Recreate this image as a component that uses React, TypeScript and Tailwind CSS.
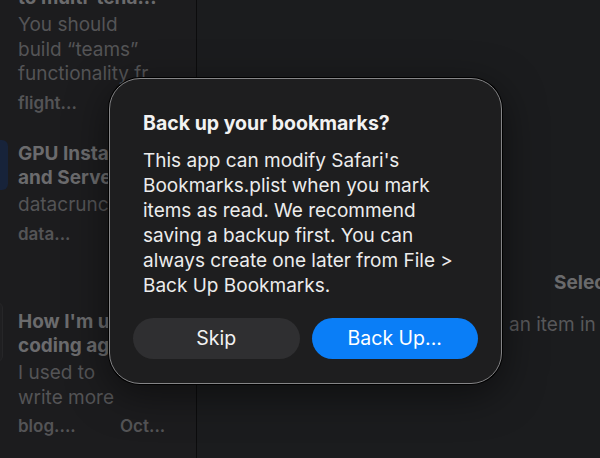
const font = { fontFamily: 'Inter, "Noto Sans", "Liberation Sans", sans-serif' };

type Item = {
  title: string[];
  summary: string[];
  footer: string;
  date?: string;
};

const ITEMS: Item[] = [
  {
    title: ['Stop building features', 'to multi-tena...'],
    summary: ['You should', 'build \u201cteams\u201d', 'functionality fr'],
    footer: 'flight...',
  },
  {
    title: ['GPU Instances', 'and Servers'],
    summary: ['datacrunch'],
    footer: 'data...',
  },
  {
    title: ["How I'm using", 'coding agents'],
    summary: ['I used to', 'write more'],
    footer: 'blog....',
    date: 'Oct...',
  },
];

function Sidebar() {
  return (
    <div className="relative w-[197px] shrink-0 border-r border-[#0c0c0d] bg-[#1c1c1e] overflow-hidden">
      {/* selection markers */}
      <div className="absolute left-[-6px] top-[140px] h-[50px] w-[14px] rounded-md bg-[#17233a]" />
      <div className="absolute left-[-10px] top-[302px] h-[60px] w-[13px] rounded-md border border-[#262628] bg-[#1f1f21]" />

      <div className="mt-[-38px] flex flex-col pl-[18px]">
        {ITEMS.map((it, i) => (
          <div key={i} className={i === 0 ? 'h-[180px]' : i === 1 ? 'h-[168px]' : 'h-[130px]'}>
            <div className="text-[19px] leading-[23.5px] font-bold text-[#6b6b6d] whitespace-nowrap">
              {it.title.map((t) => (
                <div key={t}>{t}</div>
              ))}
            </div>
            <div className="mt-[4px] text-[19px] leading-[24.5px] text-[#545456] whitespace-nowrap">
              {it.summary.map((t) => (
                <div key={t}>{t}</div>
              ))}
            </div>
            <div className="mt-[5px] flex text-[17px] leading-[22px] font-semibold text-[#545456] whitespace-nowrap">
              <span className="w-[102px]">{it.footer}</span>
              {it.date && <span>{it.date}</span>}
            </div>
          </div>
        ))}
      </div>
    </div>
  );
}

function Detail() {
  return (
    <div className="w-[838px] shrink-0 bg-[#1b1c1e] flex flex-col items-start pt-[271px]">
      <div className="ml-[357px] text-[19px] leading-[24px] font-bold text-[#6a6a6c] whitespace-nowrap">
        Select an Item
      </div>
      <div className="ml-[312px] mt-[18px] text-[19px] leading-[24px] text-[#58585a] whitespace-nowrap">
        an item in the list
      </div>
    </div>
  );
}

function Dialog() {
  return (
    <div className="absolute left-[109px] top-[78px] w-[393px] h-[306px] rounded-[31px] border border-[#858587] bg-[#1e1e1f] ring-1 ring-black shadow-[0_10px_40px_rgba(0,0,0,0.5)] flex flex-col px-[33px] pt-[33px]">
      <div className="text-[19.5px] leading-[22px] font-bold text-[#f2f2f2] whitespace-nowrap">
        Back up your bookmarks?
      </div>
      <p className="mt-[14px] text-[19px] leading-[25px] text-[#ececec] whitespace-nowrap">
        This app can modify Safari's
        <br />
        Bookmarks.plist when you mark
        <br />
        items as read. We recommend
        <br />
        saving a backup first. You can
        <br />
        always create one later from File &gt;
        <br />
        Back Up Bookmarks.
      </p>
      <div className="mt-[20px] -mx-[10px] grid grid-cols-2 gap-[12px]">
        <button className="h-[41px] rounded-full bg-[#2f2f31] text-[19.5px] text-[#f2f2f2]">Skip</button>
        <button className="h-[41px] rounded-full bg-[#0a7ef7] text-[19.5px] text-white">Back Up...</button>
      </div>
    </div>
  );
}

export default function App() {
  return (
    <div className="relative w-[600px] h-[458px] overflow-hidden bg-[#1b1c1e] flex" style={font}>
      <Sidebar />
      <Detail />
      <Dialog />
    </div>
  );
}
